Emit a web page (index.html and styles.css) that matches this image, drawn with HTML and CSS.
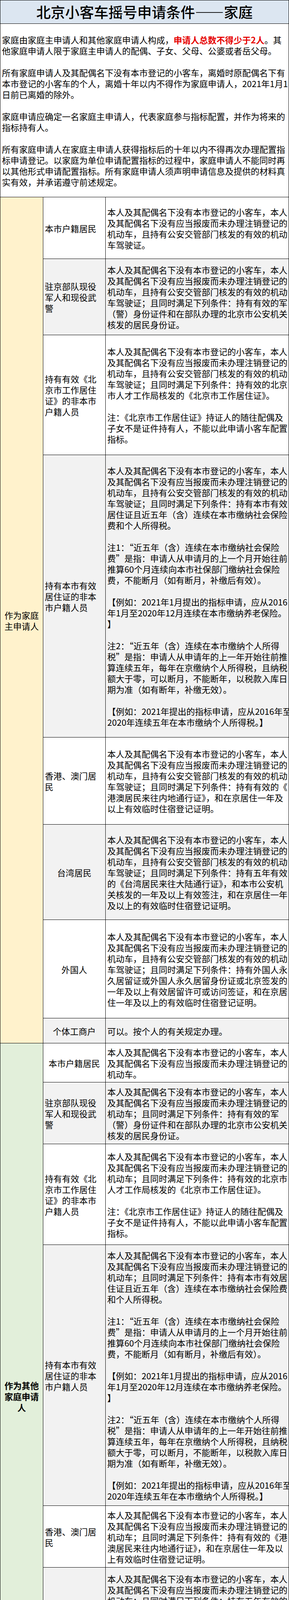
FILE: index.html
```html
<!DOCTYPE html>
<html lang="zh-CN">
<head>
<meta charset="utf-8">
<meta name="viewport" content="width=741, initial-scale=1">
<title>北京小客车摇号申请条件——家庭</title>
<link rel="stylesheet" href="styles.css">
</head>
<body>
<div class="sheet">
  <div class="title">北京小客车摇号申请条件——家庭</div>
  <div class="intro">
    <p>家庭由家庭主申请人和其他家庭申请人构成，<span class="hl">申请人总数不得少于2人</span>。其<br>他家庭申请人限于家庭主申请人的配偶、子女、父母、公婆或者岳父母。</p>
    <p>所有家庭申请人及其配偶名下没有本市登记的小客车，离婚时原配偶名下有<br>本市登记的小客车的个人，离婚十年以内不得作为家庭申请人，2021年1月1<br>日前已离婚的除外。</p>
    <p>家庭申请应确定一名家庭主申请人，代表家庭参与指标配置，并作为将来的<br>指标持有人。</p>
    <p>所有家庭申请人在家庭主申请人获得指标后的十年以内不得再次办理配置指<br>标申请登记。以家庭为单位申请配置指标的过程中，家庭申请人不能同时再<br>以其他形式申请配置指标。所有家庭申请人须声明申请信息及提供的材料真<br>实有效，并承诺遵守前述规定。</p>
  </div>

  <div class="group group-main">
    <div class="label">作为家庭主申请人</div>
    <div class="rows">
      <div class="row h158">
        <div class="kind">本市户籍居民</div>
        <div class="req"><p>本人及其配偶名下没有本市登记的小客车，本人<br>及其配偶名下没有应当报废而未办理注销登记的<br>机动车，且持有公安交管部门核发的有效的机动<br>车驾驶证。</p></div>
      </div>
      <div class="row alt h195">
        <div class="kind">驻京部队现役军人和现役武警</div>
        <div class="req"><p>本人及其配偶名下没有本市登记的小客车，本人<br>及其配偶名下没有应当报废而未办理注销登记的<br>机动车，且持有公安交管部门核发的有效的机动<br>车驾驶证；且同时满足下列条件：持有有效的军<br>（警）身份证件和在部队办理的北京市公安机关<br>核发的居民身份证。</p></div>
      </div>
      <div class="row h307">
        <div class="kind">持有有效《北京市工作居住证》的非本市户籍人员</div>
        <div class="req">
          <p>本人及其配偶名下没有本市登记的小客车，本人<br>及其配偶名下没有应当报废而未办理注销登记的<br>机动车，且持有公安交管部门核发的有效的机动<br>车驾驶证；且同时满足下列条件：持有效的北京<br>市人才工作局核发的《北京市工作居住证》。</p>
          <p>注：《北京市工作居住证》持证人的随往配偶及<br>子女不是证件持有人，不能以此申请小客车配置<br>指标。</p>
        </div>
      </div>
      <div class="row alt h723">
        <div class="kind">持有本市有效居住证的非本市户籍人员</div>
        <div class="req">
          <p>本人及其配偶名下没有本市登记的小客车，本人<br>及其配偶名下没有应当报废而未办理注销登记的<br>机动车，且持有公安交管部门核发的有效的机动<br>车驾驶证；且同时满足下列条件：持有本市有效<br>居住证且近五年（含）连续在本市缴纳社会保险<br>费和个人所得税。</p>
          <p>注1：“近五年（含）连续在本市缴纳社会保险<br>费”是指：申请人从申请月的上一个月开始往前<br>推算60个月连续向本市社保部门缴纳社会保险<br>费，不能断月（如有断月，补缴后有效）。</p>
          <p>【例如：2021年1月提出的指标申请，应从2016<br>年1月至2020年12月连续在本市缴纳养老保险。<br>】</p>
          <p>注2：“近五年（含）连续在本市缴纳个人所得<br>税”是指：申请人从申请年的上一年开始往前推<br>算连续五年，每年在京缴纳个人所得税，且纳税<br>额大于零，可以断月，不能断年，以税款入库日<br>期为准（如有断年，补缴无效）。</p>
          <p>【例如：2021年提出的指标申请，应从2016年至<br>2020年连续五年在本市缴纳个人所得税。】</p>
        </div>
      </div>
      <div class="row h223">
        <div class="kind">香港、澳门居民</div>
        <div class="req"><p>本人及其配偶名下没有本市登记的小客车，本人<br>及其配偶名下没有应当报废而未办理注销登记的<br>机动车，且持有公安交管部门核发的有效的机动<br>车驾驶证；且同时满足下列条件：持有有效的《<br>港澳居民来往内地通行证》，和在京居住一年及<br>以上有效临时住宿登记证明。</p></div>
      </div>
      <div class="row alt h244">
        <div class="kind center">台湾居民</div>
        <div class="req"><p>本人及其配偶名下没有本市登记的小客车，本人<br>及其配偶名下没有应当报废而未办理注销登记的<br>机动车，且持有公安交管部门核发的有效的机动<br>车驾驶证；且同时满足下列条件：持有五年有效<br>的《台湾居民来往大陆通行证》，和本市公安机<br>关核发的一年及以上有效签注，和在京居住一年<br>及以上的有效临时住宿登记证明。</p></div>
      </div>
      <div class="row h252">
        <div class="kind center">外国人</div>
        <div class="req"><p>本人及其配偶名下没有本市登记的小客车，本人<br>及其配偶名下没有应当报废而未办理注销登记的<br>机动车，且持有公安交管部门核发的有效的机动<br>车驾驶证；且同时满足下列条件：持有外国人永<br>久居留证或外国人永久居留身份证或北京签发的<br>一年及以上有效居留许可或访问签证，和在京居<br>住一年及以上的有效临时住宿登记证明。</p></div>
      </div>
      <div class="row alt h64">
        <div class="kind center">个体工商户</div>
        <div class="req"><p>可以。按个人的有关规定办理。</p></div>
      </div>
    </div>
  </div>

  <div class="group group-other">
    <div class="label">作为其他家庭申请人</div>
    <div class="rows">
      <div class="row h100">
        <div class="kind center">本市户籍居民</div>
        <div class="req"><p>本人及其配偶名下没有本市登记的小客车，本人<br>及其配偶名下没有应当报废而未办理注销登记的<br>机动车。</p></div>
      </div>
      <div class="row alt h158">
        <div class="kind">驻京部队现役军人和现役武警</div>
        <div class="req"><p>本人及其配偶名下没有本市登记的小客车，本人<br>及其配偶名下没有应当报废而未办理注销登记的<br>机动车；且同时满足下列条件：持有有效的军<br>（警）身份证件和在部队办理的北京市公安机关<br>核发的居民身份证。</p></div>
      </div>
      <div class="row h258">
        <div class="kind">持有有效《北京市工作居住证》的非本市户籍人员</div>
        <div class="req">
          <p>本人及其配偶名下没有本市登记的小客车，本人<br>及其配偶名下没有应当报废而未办理注销登记的<br>机动车；且同时满足下列条件：持有效的北京市<br>人才工作局核发的《北京市工作居住证》。</p>
          <p>注：《北京市工作居住证》持证人的随往配偶及<br>子女不是证件持有人，不能以此申请小客车配置<br>指标。</p>
        </div>
      </div>
      <div class="row alt h668">
        <div class="kind">持有本市有效居住证的非本市户籍人员</div>
        <div class="req">
          <p>本人及其配偶名下没有本市登记的小客车，本人<br>及其配偶名下没有应当报废而未办理注销登记的<br>机动车；且同时满足下列条件：持有本市有效居<br>住证且近五年（含）连续在本市缴纳社会保险费<br>和个人所得税。</p>
          <p>注1：“近五年（含）连续在本市缴纳社会保险<br>费”是指：申请人从申请月的上一个月开始往前<br>推算60个月连续向本市社保部门缴纳社会保险<br>费，不能断月（如有断月，补缴后有效）。</p>
          <p>【例如：2021年1月提出的指标申请，应从2016<br>年1月至2020年12月连续在本市缴纳养老保险。<br>】</p>
          <p>注2：“近五年（含）连续在本市缴纳个人所得<br>税”是指：申请人从申请年的上一年开始往前推<br>算连续五年，每年在京缴纳个人所得税，且纳税<br>额大于零，可以断月，不能断年，以税款入库日<br>期为准（如有断年，补缴无效）。</p>
          <p>【例如：2021年提出的指标申请，应从2016年至<br>2020年连续五年在本市缴纳个人所得税。】</p>
        </div>
      </div>
      <div class="row h158">
        <div class="kind">香港、澳门居民</div>
        <div class="req"><p>本人及其配偶名下没有本市登记的小客车，本人<br>及其配偶名下没有应当报废而未办理注销登记的<br>机动车；且同时满足下列条件：持有有效的《港<br>澳居民来往内地通行证》，和在京居住一年及以<br>上有效临时住宿登记证明。</p></div>
      </div>
      <div class="row alt h196">
        <div class="kind">台湾居民</div>
        <div class="req"><p>本人及其配偶名下没有本市登记的小客车，本人<br>及其配偶名下没有应当报废而未办理注销登记的<br>机动车；且同时满足下列条件：持有五年有效的<br>《台湾居民来往大陆通行证》，和本市公安机关<br>核发的一年及以上有效签注，和在京居住一年及<br>以上的有效临时住宿登记证明。</p></div>
      </div>
      <div class="row h184">
        <div class="kind">外国人</div>
        <div class="req"><p>本人及其配偶名下没有本市登记的小客车，本人<br>及其配偶名下没有应当报废而未办理注销登记的<br>机动车；且同时满足下列条件：持有外国人永久<br>居留证或外国人永久居留身份证或北京签发的一<br>年及以上有效居留许可或访问签证，和在京居住<br>一年及以上的有效临时住宿登记证明。</p></div>
      </div>
      <div class="row alt h84">
        <div class="kind">个体工商户</div>
        <div class="req"><p>可以。按个人的有关规定办理，可无需持有有效<br>的机动车驾驶证。</p></div>
      </div>
    </div>
  </div>
</div>
</body>
</html>
```
FILE: styles.css
```css
* {
  box-sizing: border-box;
}

html {
  -webkit-text-size-adjust: 100%;
  text-size-adjust: 100%;
}

html,
body {
  margin: 0;
  padding: 0;
  background: #ffffff;
}

body {
  font-family: "Noto Sans CJK SC", "Noto Sans CJK JP", "Noto Sans", sans-serif;
  font-size: 22px;
  line-height: 28px;
  color: #000000;
}

.sheet {
  width: 741px;
  height: 4477px;
  border: 1px solid #000000;
  border-bottom: 0;
  display: flex;
  flex-direction: column;
  overflow: hidden;
}

.title,
.intro,
.group,
.row {
  flex: none;
}

.title {
  height: 60px;
  background: #dce6f1;
  border-bottom: 1px solid #000000;
  display: flex;
  align-items: center;
  justify-content: center;
  font-size: 37px;
  font-weight: 500;
  line-height: 59px;
  white-space: nowrap;
}

.intro {
  height: 444px;
  border-bottom: 1px solid #000000;
  display: flex;
  flex-direction: column;
  justify-content: center;
  padding: 0 4px;
  white-space: nowrap;
}

.intro p,
.req p {
  margin: 0;
  line-height: 28px;
}

.intro p + p,
.req p + p {
  margin-top: 28px;
}

.hl {
  color: #e60000;
  font-weight: bold;
}

.group {
  display: flex;
}

.label {
  width: 110px;
  flex: none;
  border-right: 1px solid #000000;
  border-bottom: 1px solid #000000;
  display: flex;
  align-items: center;
  justify-content: center;
  text-align: center;
  padding: 0 4px;
}

.group-main .label {
  background: #fff2cc;
}

.group-other .label {
  background: #e2efda;
  font-weight: bold;
}

.rows {
  flex: 1;
  display: flex;
  flex-direction: column;
}

.row {
  display: flex;
  border-bottom: 1px solid #000000;
  background: #ffffff;
  min-height: 0;
}

.row.alt {
  background: #f2f2f2;
}

.kind {
  width: 160px;
  flex: none;
  border-right: 1px solid #000000;
  display: flex;
  align-items: center;
  padding: 0 4px;
}

.kind.center {
  justify-content: center;
  text-align: center;
}

.req {
  flex: 1;
  min-width: 0;
  display: flex;
  flex-direction: column;
  justify-content: center;
  padding: 0 0 0 4px;
  white-space: nowrap;
}

/* spreadsheet row heights */
.h64 { height: 64px; }
.h84 { height: 84px; }
.h100 { height: 100px; }
.h158 { height: 158px; }
.h184 { height: 184px; }
.h195 { height: 195px; }
.h196 { height: 196px; }
.h223 { height: 223px; }
.h244 { height: 244px; }
.h252 { height: 252px; }
.h258 { height: 258px; }
.h307 { height: 307px; }
.h668 { height: 668px; }
.h723 { height: 723px; }
```
